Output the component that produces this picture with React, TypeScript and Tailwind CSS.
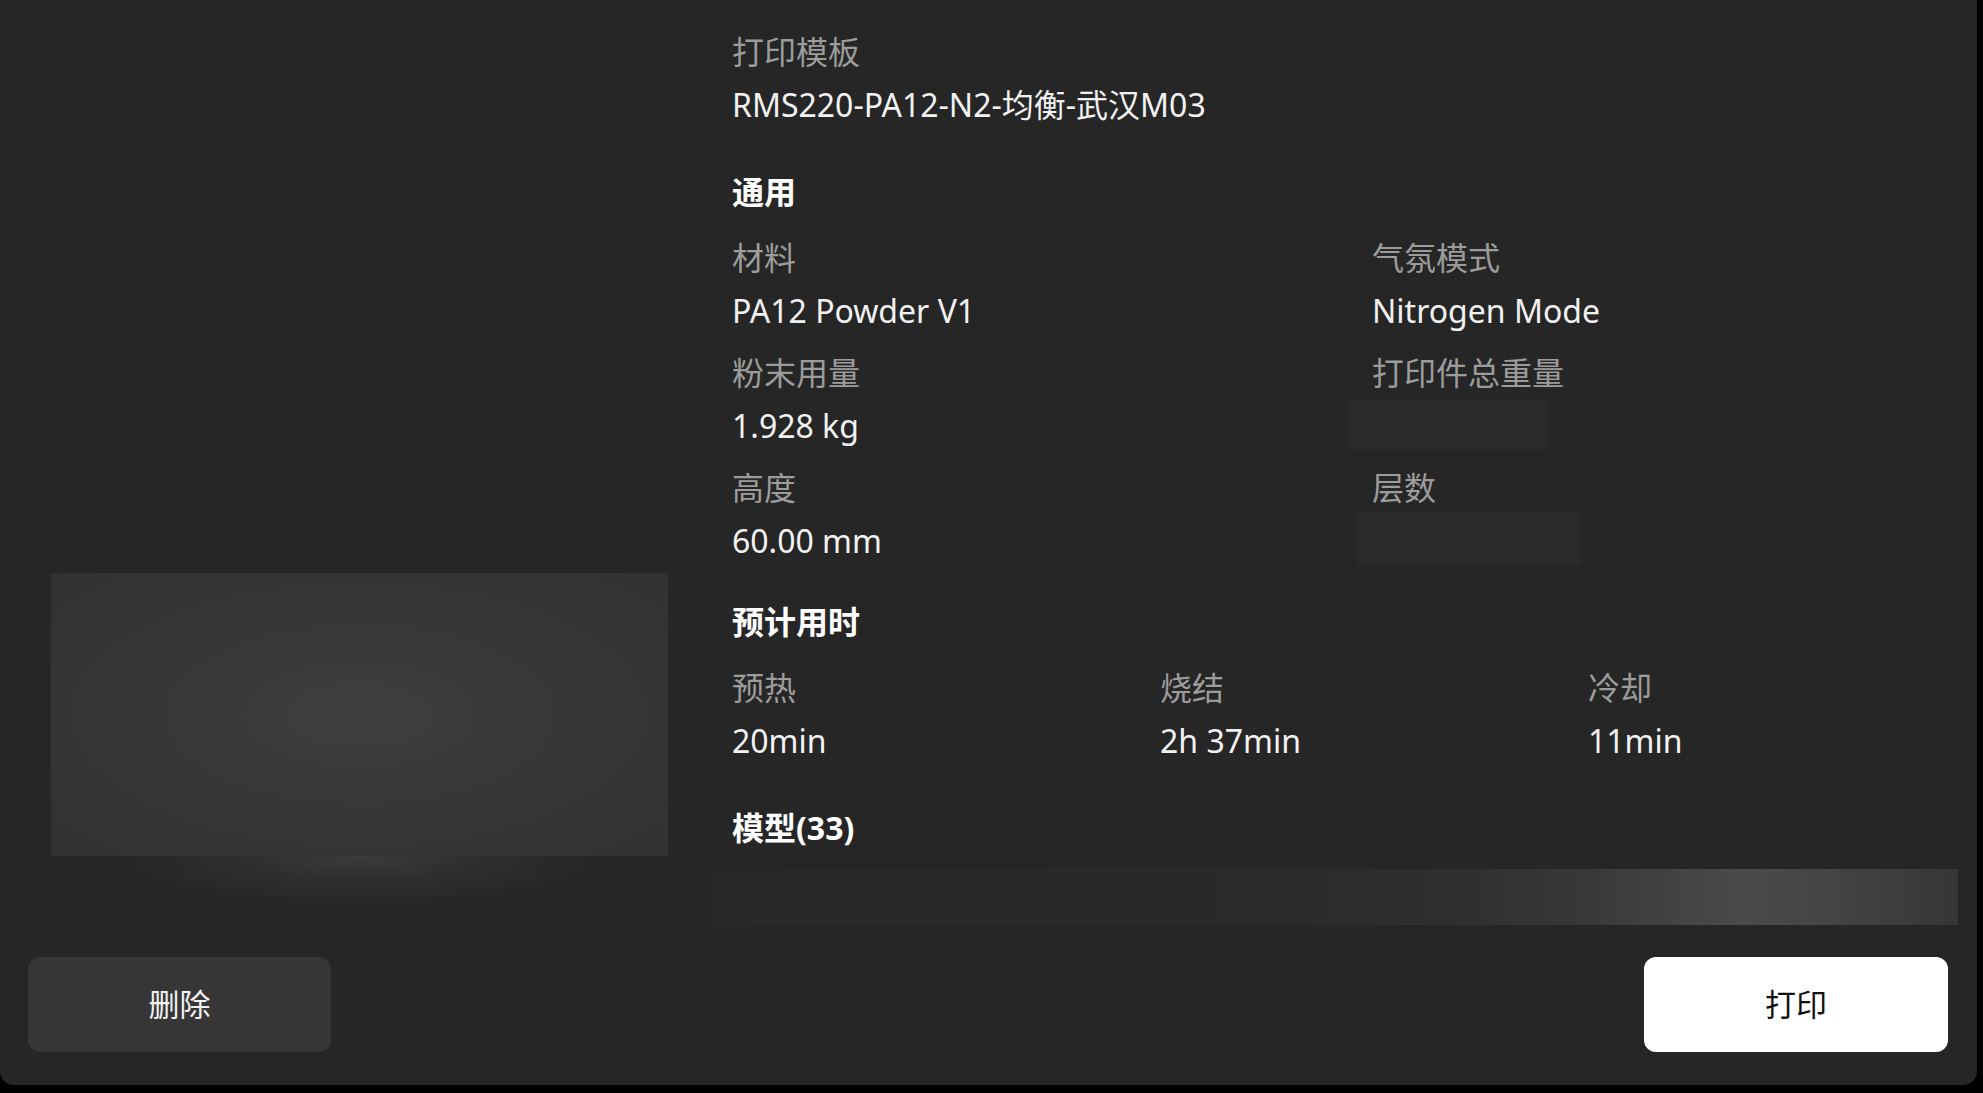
import React from 'react'

const font = "font-['Noto_Sans','Noto_Sans_CJK_SC',sans-serif]"

function Field({ label, value }: { label: string; value: React.ReactNode }) {
  return (
    <div className="flex flex-col gap-[13px]">
      <div className="text-[32px] leading-[40px] text-[#9c9c9c]">{label}</div>
      <div className="text-[32px] leading-[40px] text-[#f2f2f2]">{value}</div>
    </div>
  )
}

function Heading({ children }: { children: React.ReactNode }) {
  return <div className="text-[32px] leading-[40px] font-bold text-white">{children}</div>
}

export default function App() {
  return (
    <div className={`h-screen w-full bg-black ${font}`}>
      <div className="w-[1977px] h-[1085px] bg-[#262626] rounded-b-[14px] flex flex-col">
        {/* 上半部分 */}
        <div className="flex h-[925px]">
          {/* 缩略图 */}
          <div className="w-[708px] shrink-0 pl-[51px] pt-[573px] flex flex-col">
            <div className="w-[617px] h-[283px] bg-[radial-gradient(ellipse_at_center,#3f3f41_0%,#39393a_35%,#313131_100%)]"></div>
            <div className="w-[617px] h-[50px] bg-[radial-gradient(ellipse_40%_100%_at_50%_0%,#3b3b3b_0%,#2e2e2e_50%,transparent_100%)]"></div>
          </div>

          {/* 详情 */}
          <div className="w-[1250px] shrink-0 pt-[32px] flex flex-col">
            <div className="pl-[24px]">
              <Field label="打印模板" value="RMS220-PA12-N2-均衡-武汉M03" />

              <div className="mt-[47px]">
                <Heading>通用</Heading>
              </div>
              <div className="mt-[26px] grid grid-cols-[640px_640px] gap-y-[22px]">
                <Field label="材料" value="PA12 Powder V1" />
                <Field label="气氛模式" value="Nitrogen Mode" />
                <Field label="粉末用量" value="1.928 kg" />
                <Field
                  label="打印件总重量"
                  value={<div className="-ml-[25px] -mt-[6px] -mb-[4px] w-[202px] h-[50px] bg-[#2a2a2a]"></div>}
                />
                <Field label="高度" value="60.00 mm" />
                <Field
                  label="层数"
                  value={<div className="-ml-[15px] -mt-[10px] -mb-[4px] w-[224px] h-[54px] bg-[#2a2a2a]"></div>}
                />
              </div>

              <div className="mt-[41px]">
                <Heading>预计用时</Heading>
              </div>
              <div className="mt-[26px] grid grid-cols-[428px_428px_428px]">
                <Field label="预热" value="20min" />
                <Field label="烧结" value="2h 37min" />
                <Field label="冷却" value="11min" />
              </div>

              <div className="mt-[47px]">
                <Heading>模型(33)</Heading>
              </div>
            </div>
            <div className="mt-[21px] h-[56px] w-[1250px] bg-[linear-gradient(to_right,#282828_0%,#2a2a2a_45%,#2f2f2f_60%,#383838_70%,#444444_78%,#4a4a4a_83%,#444444_90%,#363636_100%)]"></div>
          </div>
        </div>

        {/* 按钮 */}
        <div className="mt-[32px] flex justify-between pl-[28px] pr-[29px]">
          <button className="w-[303px] h-[95px] rounded-[12px] bg-[#363636] text-[31px] text-[#f2f2f2]">
            删除
          </button>
          <button className="w-[304px] h-[95px] rounded-[12px] bg-white text-[31px] text-[#111111]">
            打印
          </button>
        </div>
      </div>
    </div>
  )
}
